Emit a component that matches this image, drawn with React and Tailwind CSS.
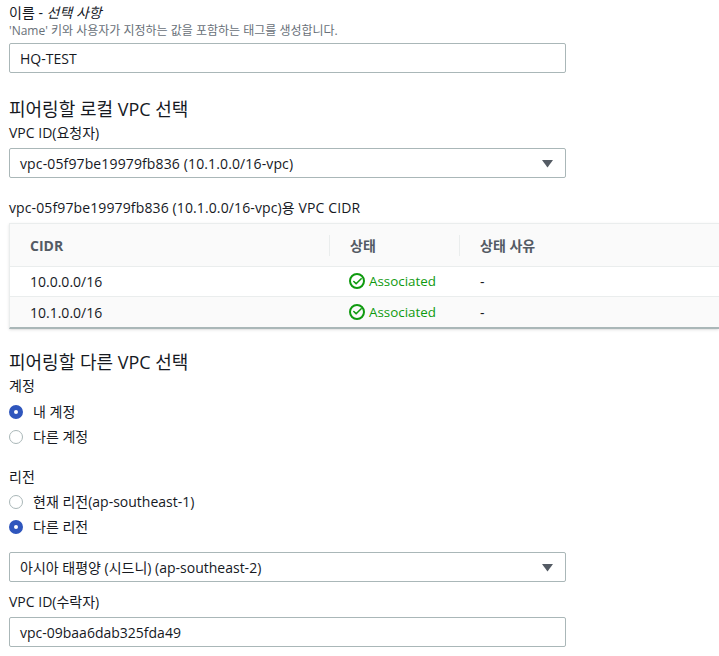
import { Check } from "lucide-react";

const font = { fontFamily: '"Open Sans", "Noto Sans CJK KR", sans-serif' };

function TextBox({ value, className = "" }) {
  return (
    <div className={`w-[557px] h-[30px] flex items-center pl-[10px] pr-4 bg-white border border-[#aab7b8] rounded-[2px] text-[14px] text-[#16191f] ${className}`}>
      {value}
    </div>
  );
}

function SelectBox({ value, className = "", textClass = "" }) {
  return (
    <div className={`w-[557px] h-[30px] flex items-center justify-between pl-[10px] pr-[11px] bg-white border border-[#aab7b8] rounded-[2px] text-[14px] text-[#16191f] ${className}`}>
      <span className={textClass}>{value}</span>
      <svg width="13" height="9" viewBox="0 0 13 9">
        <path d="M1 1h11L6.5 8.5z" fill="#545b64" />
      </svg>
    </div>
  );
}

function Radio({ label, checked }) {
  return (
    <div className="flex items-center h-[25px] text-[14px] text-[#16191f]">
      {checked ? (
        <span className="w-[14px] h-[14px] rounded-full border-[5px] border-[#2f56bd] bg-white" />
      ) : (
        <span className="w-[14px] h-[14px] rounded-full border border-[#aab7b8] bg-white" />
      )}
      <span className="ml-[10px]">{label}</span>
    </div>
  );
}

function StatusCell() {
  return (
    <div className="flex items-center text-[13.4px] text-[#0f9a0f]">
      <span className="w-[16px] h-[16px] rounded-full border-2 border-[#0f9a0f] flex items-center justify-center">
        <Check size={11} strokeWidth={3.5} />
      </span>
      <span className="ml-1">Associated</span>
    </div>
  );
}

function Row({ cidr, striped }) {
  return (
    <div className={`flex items-center text-[14px] text-[#16191f] ${striped ? "h-[31px] bg-[#fafafa] border-t border-[#eaeded]" : "h-[29px] bg-white"}`}>
      <div className="w-[320px] pl-[20px]">{cidr}</div>
      <div className="w-[130px] pl-[19px]"><StatusCell /></div>
      <div className="pl-[20px]">-</div>
    </div>
  );
}

export default function App() {
  return (
    <div style={font} className="w-[719px] h-[656px] overflow-hidden bg-white pl-[9px]">
      <div className="h-[23px] pt-[3px] text-[14px] leading-[20px] text-[#16191f]">
        이름 - <i>선택 사항</i>
      </div>
      <div className="h-[20px] text-[12px] leading-[16px] text-[#687078]">
        'Name' 키와 사용자가 지정하는 값을 포함하는 태그를 생성합니다.
      </div>
      <TextBox value="HQ-TEST" />

      <h2 className="mt-[23px] text-[18px] leading-[26px] text-[#16191f]">피어링할 로컬 VPC 선택</h2>
      <div className="mt-[1px] text-[14px] leading-[20px] text-[#16191f]">VPC ID(요청자)</div>
      <SelectBox value="vpc-05f97be19979fb836 (10.1.0.0/16-vpc)" textClass="tracking-[0.13px]" className="mt-[5px]" />

      <div className="mt-[20px] text-[14px] leading-[20px] tracking-[0.12px] text-[#16191f]">vpc-05f97be19979fb836 (10.1.0.0/16-vpc)용 VPC CIDR</div>

      <div className="mt-[5px] border-t border-l border-[#eaeded] border-b-2 border-b-[#aab7b8] shadow-sm">
        <div className="flex items-center h-[43px] bg-[#fafafa] border-b border-[#eaeded] text-[14px] font-bold text-[#545b64]">
          <div className="w-[320px] pl-[20px] h-[21px] flex items-center border-r border-[#eaeded]">CIDR</div>
          <div className="w-[130px] pl-[20px] h-[21px] flex items-center border-r border-[#eaeded]">상태</div>
          <div className="pl-[20px]">상태 사유</div>
        </div>
        <Row cidr="10.0.0.0/16" />
        <Row cidr="10.1.0.0/16" striped />
      </div>

      <h2 className="mt-[20px] text-[18px] leading-[26px] text-[#16191f]">피어링할 다른 VPC 선택</h2>
      <div className="mt-[1px] text-[14px] leading-[20px] text-[#16191f]">계정</div>
      <div className="mt-[3px]">
        <Radio label="내 계정" checked />
        <Radio label="다른 계정" />
      </div>
      <div className="mt-[18px] text-[14px] leading-[20px] text-[#16191f]">리전</div>
      <div className="mt-[2px]">
        <Radio label="현재 리전(ap-southeast-1)" />
        <Radio label="다른 리전" checked />
      </div>
      <SelectBox value="아시아 태평양 (시드니) (ap-southeast-2)" className="mt-[13px]" />
      <div className="mt-[10px] text-[14px] leading-[20px] text-[#16191f]">VPC ID(수락자)</div>
      <TextBox value="vpc-09baa6dab325fda49" className="mt-[5px]" />
    </div>
  );
}
